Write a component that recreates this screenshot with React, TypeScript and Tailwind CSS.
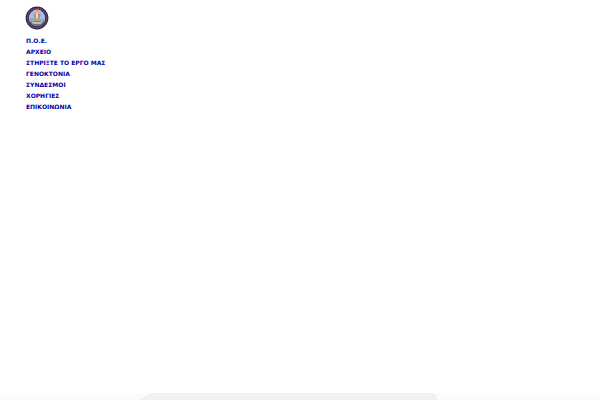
type NavItem = { href: string; label: string };

const NAV: NavItem[] = [
  { href: "#poe", label: "Π.Ο.Ε." },
  { href: "#archive", label: "ΑΡΧΕΙΟ" },
  { href: "#support", label: "ΣΤΗΡΙΞΤΕ ΤΟ ΕΡΓΟ ΜΑΣ" },
  { href: "#genocide", label: "ΓΕΝΟΚΤΟΝΙΑ" },
  { href: "#links", label: "ΣΥΝΔΕΣΜΟΙ" },
  { href: "#sponsors", label: "ΧΟΡΗΓΙΕΣ" },
  { href: "#contact", label: "ΕΠΙΚΟΙΝΩΝΙΑ" },
];

function Emblem() {
  return (
    <svg viewBox="0 0 24 24" className="size-6" aria-hidden>
      <circle cx="12" cy="12" r="11.4" fill="#2e2650" />
      <circle cx="12" cy="12" r="9.6" fill="none" stroke="#7d5468" strokeWidth="1.2" strokeDasharray="1.4 0.6" />
      <circle cx="12" cy="12" r="8.2" fill="#a3c0ea" />
      {/* land and sea */}
      <path d="M4 12.500q4-1.500 8 0t8 0l-.5 3.500h-15z" fill="#8fb0a8" />
      <path d="M4.500 15h15a8 8 0 0 1-15 0z" fill="#6f6f8c" />
      {/* eagle */}
      <path d="M8 4.500a8.500 8.500 0 0 1 8 0l-1.500 2.500h-5z" fill="#d9aeb0" />
      <path d="M12 5l1.500 2 2.200 1.500-1.200 4.500h-5l-1.200-4.500 2.200-1.500z" fill="#b98f8a" />
      <path d="M11 6.500h2v6h-2z" fill="#ecd9bf" />
      {/* ribbon */}
      <path d="M6 15q6 2.200 12 0l-1.500 2.500q-4.500 1.600-9 0z" fill="#c9c2a6" />
    </svg>
  );
}

export default function App() {
  return (
    <div className="flex min-h-screen flex-col bg-white font-['DejaVu_Sans',sans-serif]">
      <header className="px-[25px] pt-[6px]">
        <a href="#home" aria-label="Π.Ο.Ε." className="block w-6">
          <Emblem />
        </a>
      </header>

      <nav className="px-[26px] pt-[5px]">
        <ul className="text-[6px] leading-[11px] font-bold text-[#0000a8]">
          {NAV.map((item) => (
            <li key={item.href}>
              <a href={item.href}>{item.label}</a>
            </li>
          ))}
        </ul>
      </nav>

      <footer className="mt-auto bg-[#fbfbfb]">
        <svg
          viewBox="0 0 600 7"
          preserveAspectRatio="none"
          className="block h-[7px] w-full"
          aria-hidden
        >
          <path d="M151 0H434L438 7H138L144 4Z" fill="#f1f1f1" />
        </svg>
      </footer>
    </div>
  );
}
